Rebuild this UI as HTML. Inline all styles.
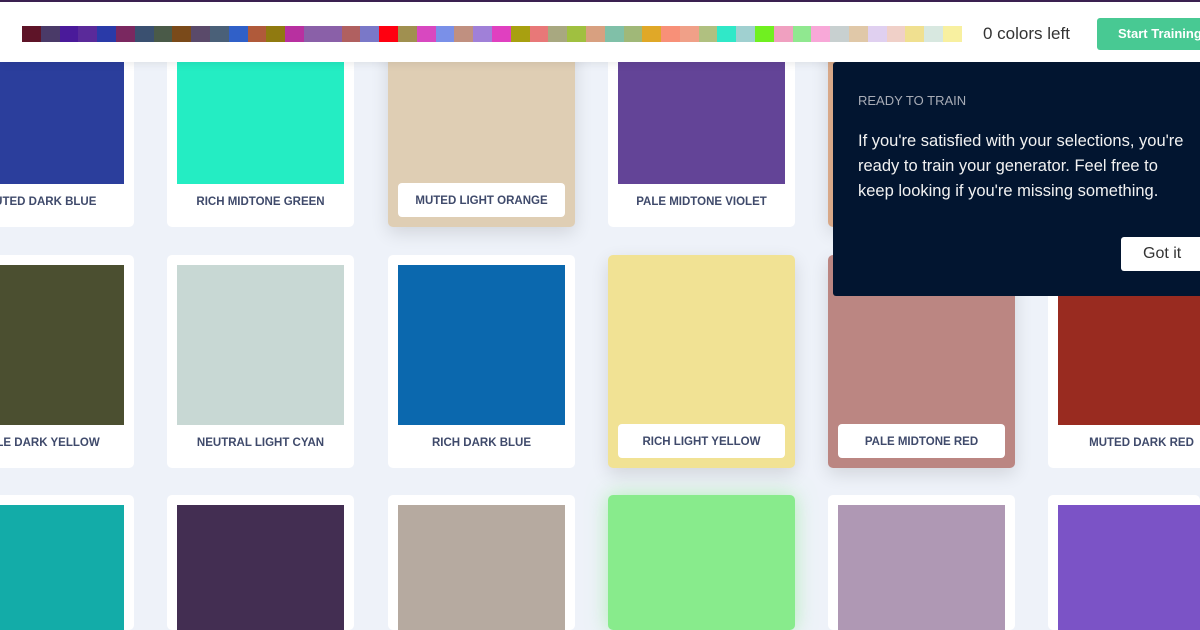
<!DOCTYPE html>
<html><head><meta charset="utf-8"><style>
*{box-sizing:border-box;margin:0;padding:0}
html,body{width:1200px;height:630px;overflow:hidden}
body{background:#eef2f9;font-family:"Liberation Sans",sans-serif}
#wrap{position:relative;width:1200px;height:630px;overflow:hidden}
.hdr{position:absolute;left:0;top:0;width:1200px;height:62px;background:#fff;border-top:2px solid #3a2050;box-shadow:0 2px 8px rgba(0,0,0,.08);z-index:5}
.strip{position:absolute;left:22px;top:24px;height:16px;display:flex;width:940px}
.strip i{flex:1;height:16px}
.left{position:absolute;left:983px;top:22px;font-size:17px;color:#333}
.btn{position:absolute;left:1097px;top:16px;width:103px;height:32px;background:#48c993;color:#fff;font-weight:bold;font-size:13px;line-height:32px;padding-left:21px;border-radius:3px 0 0 3px;white-space:nowrap;overflow:hidden}
.card{position:absolute;width:187px;height:213px;background:#fff;border-radius:5px}
.card .sw{position:absolute;left:10px;top:10px;width:167px;height:160px}
.card .lb{position:absolute;left:10px;top:170px;width:167px;height:34px;line-height:36px;text-align:center;font-size:11.5px;font-weight:bold;color:#3f4a6b;letter-spacing:0;white-space:nowrap;border-radius:4px}
.card.sel{box-shadow:0 6px 18px rgba(0,0,0,.12)}
.card.sel .lb{background:#fff;top:169px}
.tip{position:absolute;left:833px;top:62px;width:367px;height:234px;background:#021530;border-radius:3px 0 0 3px;z-index:6;color:#fff;overflow:hidden}
.tip h4{position:absolute;left:25px;top:31px;font-size:13px;font-weight:normal;color:#a8acb6}
.tip p{position:absolute;left:25px;top:67px;font-size:16.5px;line-height:25px;white-space:nowrap;color:#f2f2f2}
.tip .g{position:absolute;left:288px;top:175px;width:100px;height:34px;background:#fff;color:#333;font-size:16px;line-height:34px;padding-left:22px;border-radius:3px}
</style></head><body><div id="wrap">
<div class="hdr">
<div class="strip">
<i style="background:#5e1428"></i><i style="background:#4a3a68"></i><i style="background:#4a1a9a"></i><i style="background:#5a2a9a"></i><i style="background:#2a3aa8"></i><i style="background:#7a2860"></i><i style="background:#3a5070"></i><i style="background:#4a5a48"></i><i style="background:#7a4a1a"></i><i style="background:#5a4a6a"></i><i style="background:#4a6078"></i><i style="background:#3060c8"></i><i style="background:#b05a3a"></i><i style="background:#907a10"></i><i style="background:#b830a0"></i><i style="background:#8a60a8"></i><i style="background:#8a60a8"></i><i style="background:#b06060"></i><i style="background:#7a78c8"></i><i style="background:#ff0010"></i><i style="background:#a09050"></i><i style="background:#d848c0"></i><i style="background:#7a90e8"></i><i style="background:#c09080"></i><i style="background:#a080d8"></i><i style="background:#e040c0"></i><i style="background:#a8a010"></i><i style="background:#e87878"></i><i style="background:#a8a880"></i><i style="background:#a0c040"></i><i style="background:#d8a080"></i><i style="background:#80c0a8"></i><i style="background:#a0b878"></i><i style="background:#e0a828"></i><i style="background:#f89078"></i><i style="background:#f0a088"></i><i style="background:#b0c080"></i><i style="background:#30e8c8"></i><i style="background:#a0d0d0"></i><i style="background:#70f020"></i><i style="background:#f0a0c0"></i><i style="background:#90e890"></i><i style="background:#f8a8d8"></i><i style="background:#c8d0d0"></i><i style="background:#e0c8a8"></i><i style="background:#e0d0f0"></i><i style="background:#f0d0c8"></i><i style="background:#f0e090"></i><i style="background:#d8e8e0"></i><i style="background:#f8f0a0"></i>
</div>
<div class="left">0 colors left</div>
<div class="btn">Start Training</div>
</div>

<div class="card" style="left:-53px;top:14px"><div class="sw" style="background:#2b3e9c"></div><div class="lb">MUTED DARK BLUE</div></div>
<div class="card" style="left:167px;top:14px"><div class="sw" style="background:#24edc3"></div><div class="lb">RICH MIDTONE GREEN</div></div>
<div class="card sel" style="left:388px;top:14px;background:#dfceb4"><div class="sw" style="background:#dfceb4"></div><div class="lb">MUTED LIGHT ORANGE</div></div>
<div class="card" style="left:608px;top:14px"><div class="sw" style="background:#634497"></div><div class="lb">PALE MIDTONE VIOLET</div></div>
<div class="card sel" style="left:828px;top:14px;background:#d8a888"><div class="sw" style="background:#d8a888"></div><div class="lb">LIGHT</div></div>
<div class="card" style="left:1048px;top:14px"><div class="sw" style="background:#c0c0c0"></div><div class="lb"></div></div>

<div class="card" style="left:-53px;top:255px"><div class="sw" style="background:#4b4f30"></div><div class="lb">PALE DARK YELLOW</div></div>
<div class="card" style="left:167px;top:255px"><div class="sw" style="background:#c8d8d4"></div><div class="lb">NEUTRAL LIGHT CYAN</div></div>
<div class="card" style="left:388px;top:255px"><div class="sw" style="background:#0b68ae"></div><div class="lb">RICH DARK BLUE</div></div>
<div class="card sel" style="left:608px;top:255px;background:#f1e294"><div class="sw" style="background:#f1e294"></div><div class="lb">RICH LIGHT YELLOW</div></div>
<div class="card sel" style="left:828px;top:255px;background:#bb8682"><div class="sw" style="background:#bb8682"></div><div class="lb">PALE MIDTONE RED</div></div>
<div class="card" style="left:1048px;top:255px;width:152px;border-radius:5px 0 0 5px;overflow:hidden"><div class="sw" style="background:#992b20"></div><div class="lb">MUTED DARK RED</div></div>

<div class="card" style="left:-53px;top:495px;height:135px"><div class="sw" style="background:#13aca8;height:125px"></div></div>
<div class="card" style="left:167px;top:495px;height:135px"><div class="sw" style="background:#432e52;height:125px"></div></div>
<div class="card" style="left:388px;top:495px;height:135px"><div class="sw" style="background:#b6aaa0;height:125px"></div></div>
<div class="card sel" style="left:608px;top:495px;height:135px;background:#88eb8c;box-shadow:0 0 20px rgba(136,235,140,.6)"></div>
<div class="card" style="left:828px;top:495px;height:135px"><div class="sw" style="background:#af98b4;height:125px"></div></div>
<div class="card" style="left:1048px;top:495px;height:135px;width:152px"><div class="sw" style="background:#7b53c6;height:125px;width:142px"></div></div>

<div class="tip">
<h4>READY TO TRAIN</h4>
<p>If you're satisfied with your selections, you're<br>ready to train your generator. Feel free to<br>keep looking if you're missing something.</p>
<div class="g">Got it</div>
</div>
</div></body></html>
